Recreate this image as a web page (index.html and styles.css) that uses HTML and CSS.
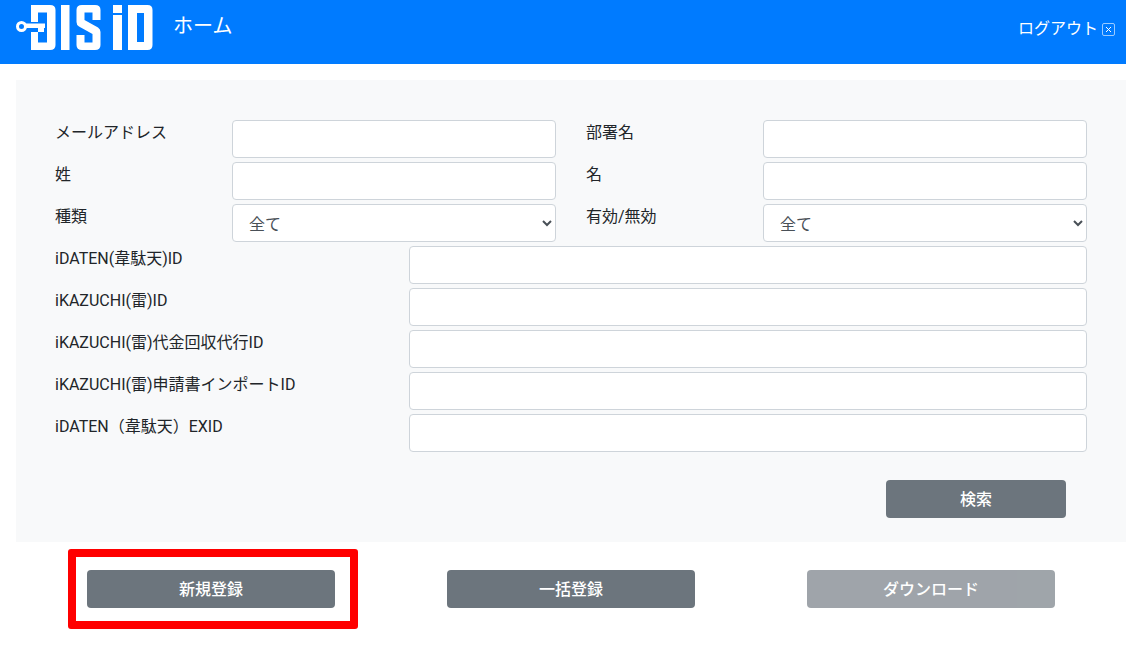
FILE: index.html
```html
<!DOCTYPE html>
<html lang="ja">
<head>
<meta charset="utf-8">
<title>DIS iD</title>
<link rel="stylesheet" href="styles.css">
</head>
<body>
<header class="topbar">
  <svg class="logo" width="142" height="56" viewBox="14 0 142 56" role="img" aria-label="DIS iD">
    <g fill="#fff">
      <path d="M31 5H50Q55.500 5 55.500 10V45Q55.500 50 50 50H31V32H38V42.500H47V12.500H38V22H31Z"/>
      <rect x="61" y="5" width="8.500" height="45"/>
      <path d="M82 5H95Q100.500 5 100.500 10V20H92.500V12.500H84.500V20L98 27.500Q100.500 29 100.500 32V45Q100.500 50 95 50H82Q76.500 50 76.500 45V35H84.500V42.500H92.500V34L79 26.500Q76.500 25 76.500 22V10Q76.500 5 82 5Z"/>
      <rect x="113" y="5" width="9" height="8"/>
      <rect x="113" y="15" width="9" height="35"/>
      <path d="M128 5H147.500Q152.500 5 152.500 10V45Q152.500 50 147.500 50H128ZM137 13V42H144V13Z" fill-rule="evenodd"/>
      <path d="M26 23.500H45V28H44V32H38V28H26Z"/>
    </g>
    <circle cx="21.500" cy="26.500" r="4" fill="none" stroke="#fff" stroke-width="3"/>
  </svg>
  <a class="home" href="#">ホーム</a>
  <a class="logout" href="#">ログアウト
    <svg class="logout-icon" width="13" height="13" viewBox="0 0 13 13" aria-hidden="true">
      <rect x=".5" y=".5" width="12" height="12" rx="1.5" fill="none" stroke="#fff" stroke-opacity=".6"/>
      <path d="M4 4l5 5M9 4l-5 5" stroke="#fff" fill="none"/>
    </svg>
  </a>
</header>

<main>
  <form class="panel">
    <div class="grid">
      <label class="lbl">メールアドレス</label><input class="ctl" type="text">
      <label class="lbl">部署名</label><input class="ctl" type="text">
      <label class="lbl">姓</label><input class="ctl" type="text">
      <label class="lbl">名</label><input class="ctl" type="text">
      <label class="lbl">種類</label><select class="ctl sel"><option>全て</option></select>
      <label class="lbl">有効/無効</label><select class="ctl sel"><option>全て</option></select>
    </div>
    <div class="wide">
      <label class="lbl">iDATEN(韋駄天)ID</label><input class="ctl" type="text">
      <label class="lbl">iKAZUCHI(雷)ID</label><input class="ctl" type="text">
      <label class="lbl">iKAZUCHI(雷)代金回収代行ID</label><input class="ctl" type="text">
      <label class="lbl">iKAZUCHI(雷)申請書インポートID</label><input class="ctl" type="text">
      <label class="lbl">iDATEN（韋駄天）EXID</label><input class="ctl" type="text">
    </div>
    <div class="search-row">
      <button class="btn search" type="button">検索</button>
    </div>
  </form>

  <div class="actions">
    <div class="highlight" aria-hidden="true"></div>
    <button class="btn action" type="button">新規登録</button>
    <button class="btn action" type="button">一括登録</button>
    <button class="btn action off" type="button">ダウンロード</button>
  </div>
</main>
</body>
</html>
```
FILE: styles.css
```css
* { box-sizing: border-box; }

html, body { height: 100%; }

body {
  margin: 0;
  overflow: hidden;
  background: #fff;
  color: #212529;
  font-family: "Roboto", "Noto Sans CJK JP", sans-serif;
  font-size: 16px;
  line-height: 24px;
}

.topbar {
  display: flex;
  align-items: flex-start;
  height: 64px;
  padding-left: 14px;
  background: #007bff;
  color: #fff;
}

.logo { flex: none; display: block; }

.home {
  margin: 14px 0 0 17px;
  color: #fff;
  font-size: 20px;
  text-decoration: none;
}

.logout {
  display: flex;
  align-items: center;
  gap: 4px;
  margin: 17px 11px 0 auto;
  color: #fff;
  text-decoration: none;
}

.panel {
  margin: 16px 0 0 16px;
  height: 462px;
  padding: 40px 39px 0;
  background: #f8f9fa;
}

.grid {
  display: grid;
  grid-template-columns: 177px 324px 207px 324px;
  row-gap: 4px;
  width: 1032px;
}

.grid .lbl:nth-child(4n + 3) { padding-left: 30px; }

.wide {
  display: grid;
  grid-template-columns: 354px 678px;
  row-gap: 4px;
  width: 1032px;
  margin-top: 4px;
}

.lbl { display: block; height: 38px; padding-top: 1px; }

.ctl {
  display: block;
  width: 100%;
  height: 38px;
  border: 1px solid #ced4da;
  border-radius: 4px;
  background: #fff;
  color: #495057;
  font: inherit;
  outline: 0;
}

.sel { padding: 2px 0 0 12px; }

.search-row {
  display: flex;
  justify-content: flex-end;
  width: 1011px;
  margin-top: 28px;
}

.btn {
  display: block;
  height: 38px;
  padding: 2px 0 0;
  border: 0;
  border-radius: 4px;
  background: #6c757d;
  color: #fff;
  font: inherit;
  font-weight: 500;
  text-align: center;
}

.search { width: 180px; }

.actions {
  position: relative;
  display: flex;
  gap: 112px;
  padding: 28px 0 0 87px;
}

.action { width: 248px; }

.off { opacity: .65; }

.highlight {
  position: absolute;
  left: 68px;
  top: 7px;
  width: 290px;
  height: 80px;
  border: 8px solid #f00;
  border-radius: 3px;
}
```
